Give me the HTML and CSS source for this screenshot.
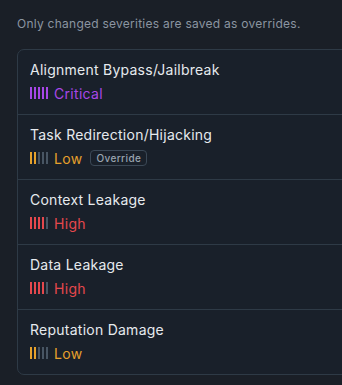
FILE: index.html
```html
<!DOCTYPE html>
<html>
<head>
<meta charset="utf-8">
<link rel="stylesheet" href="styles.css">
</head>
<body>
<div class="page">
  <p class="hint">Only changed severities are saved as overrides.</p>
  <div class="card">
    <div class="row">
      <div class="title">Alignment Bypass/Jailbreak</div>
      <div class="sev critical">
        <span class="bars"><i class="on"></i><i class="on"></i><i class="on"></i><i class="on"></i><i class="on"></i></span>
        <span class="label">Critical</span>
      </div>
    </div>
    <div class="row">
      <div class="title">Task Redirection/Hijacking</div>
      <div class="sev low">
        <span class="bars"><i class="on"></i><i class="on"></i><i></i><i></i><i></i></span>
        <span class="label">Low</span>
        <span class="badge">Override</span>
      </div>
    </div>
    <div class="row">
      <div class="title">Context Leakage</div>
      <div class="sev high">
        <span class="bars"><i class="on"></i><i class="on"></i><i class="on"></i><i class="on"></i><i></i></span>
        <span class="label">High</span>
      </div>
    </div>
    <div class="row">
      <div class="title">Data Leakage</div>
      <div class="sev high">
        <span class="bars"><i class="on"></i><i class="on"></i><i class="on"></i><i class="on"></i><i></i></span>
        <span class="label">High</span>
      </div>
    </div>
    <div class="row">
      <div class="title">Reputation Damage</div>
      <div class="sev low">
        <span class="bars"><i class="on"></i><i class="on"></i><i></i><i></i><i></i></span>
        <span class="label">Low</span>
      </div>
    </div>
  </div>
</div>
</body>
</html>
```
FILE: styles.css
```css
html, body {
  margin: 0;
  padding: 0;
  background: #1a1f27;
  overflow: hidden;
}
.page {
  padding: 16px 0 0 17px;
  font-family: Inter, "Noto Sans", sans-serif;
  width: 420px;
}
.hint {
  margin: 0 0 17px 0;
  font-size: 12px;
  line-height: 16px;
  letter-spacing: 0.25px;
  color: #8b95a1;
}
.card {
  border: 1px solid #2e3a46;
  border-radius: 7px;
  background: #19202a;
}
.row {
  padding: 10px 12px 12px 12px;
  border-top: 1px solid #2e3a46;
  display: flex;
  flex-direction: column;
  gap: 4px;
}
.row:first-child {
  border-top: none;
  padding-top: 10px;
}
.title {
  font-size: 14px;
  line-height: 20px;
  letter-spacing: 0.25px;
  color: #e6eaee;
  font-weight: 400;
}
.sev {
  display: flex;
  align-items: center;
  height: 18px;
  font-size: 14px;
  letter-spacing: 0.3px;
}
.bars {
  display: flex;
  gap: 2px;
  margin-right: 6px;
}
.bars i {
  display: block;
  width: 2px;
  height: 12px;
  background: #485563;
}
.critical { color: #a847e8; }
.critical .bars i.on { background: #a847e8; }
.low { color: #e6a12c; }
.low .bars i.on { background: #e6a12c; }
.high { color: #e5484d; }
.high .bars i.on { background: #e5484d; }
.badge {
  margin-left: 8px;
  border: 1px solid #3b4856;
  border-radius: 4px;
  font-size: 10px;
  line-height: 14px;
  padding: 0 5px;
  letter-spacing: 0.4px;
  color: #9ba5b0;
  font-weight: 500;
}
```
